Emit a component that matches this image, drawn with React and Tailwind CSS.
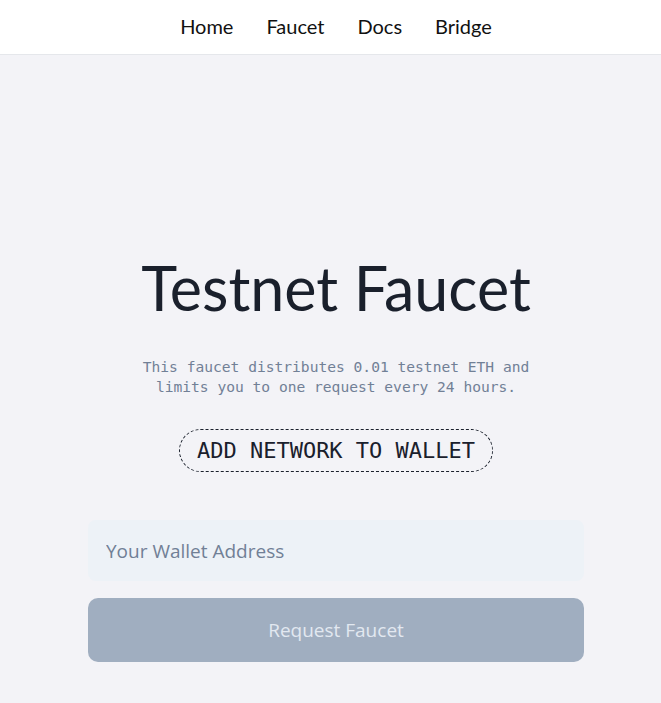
export default function App() {
  const links = ["Home", "Faucet", "Docs", "Bridge"];

  return (
    <div className="min-h-screen bg-[#f3f3f7] overflow-hidden">
      <div className="w-[672px]">
        <nav className="h-[55px] pb-[2px] bg-white border-b border-[#e5e7eb] flex items-center justify-center gap-[33px]">
          {links.map((l) => (
            <a key={l} href="#" className="text-[20px] text-[#111] font-['Lato',sans-serif]">
              {l}
            </a>
          ))}
        </nav>

        <main className="flex flex-col items-center pt-[202px] px-[88px]">
          <h1 className="text-[61px] leading-none text-[#1a202c] font-['Lato',sans-serif]">
            Testnet Faucet
          </h1>

          <p className="mt-[39px] text-center text-[14.6px] leading-5 text-[#718096] font-['DejaVu_Sans_Mono',monospace]">
            This faucet distributes 0.01 testnet ETH and
            <br />
            limits you to one request every 24 hours.
          </p>

          <button className="mt-[32px] h-[43px] px-[17px] rounded-full border border-dashed border-[#1a202c] text-[22px] text-[#1a202c] font-['DejaVu_Sans_Mono',monospace]">
            ADD NETWORK TO WALLET
          </button>

          <div className="mt-[48px] w-full flex flex-col gap-[17px]">
            <input
              type="text"
              placeholder="Your Wallet Address"
              className="w-full h-[61px] rounded-lg bg-[#edf2f7] px-[18px] text-[19px] placeholder:text-[#718096] outline-none font-['Open_Sans',sans-serif]"
            />
            <button className="w-full h-[64px] rounded-[10px] bg-[#a0aec0] text-[19px] text-[#e2e8f0] font-['Open_Sans',sans-serif]">
              Request Faucet
            </button>
          </div>
        </main>
      </div>
    </div>
  );
}
